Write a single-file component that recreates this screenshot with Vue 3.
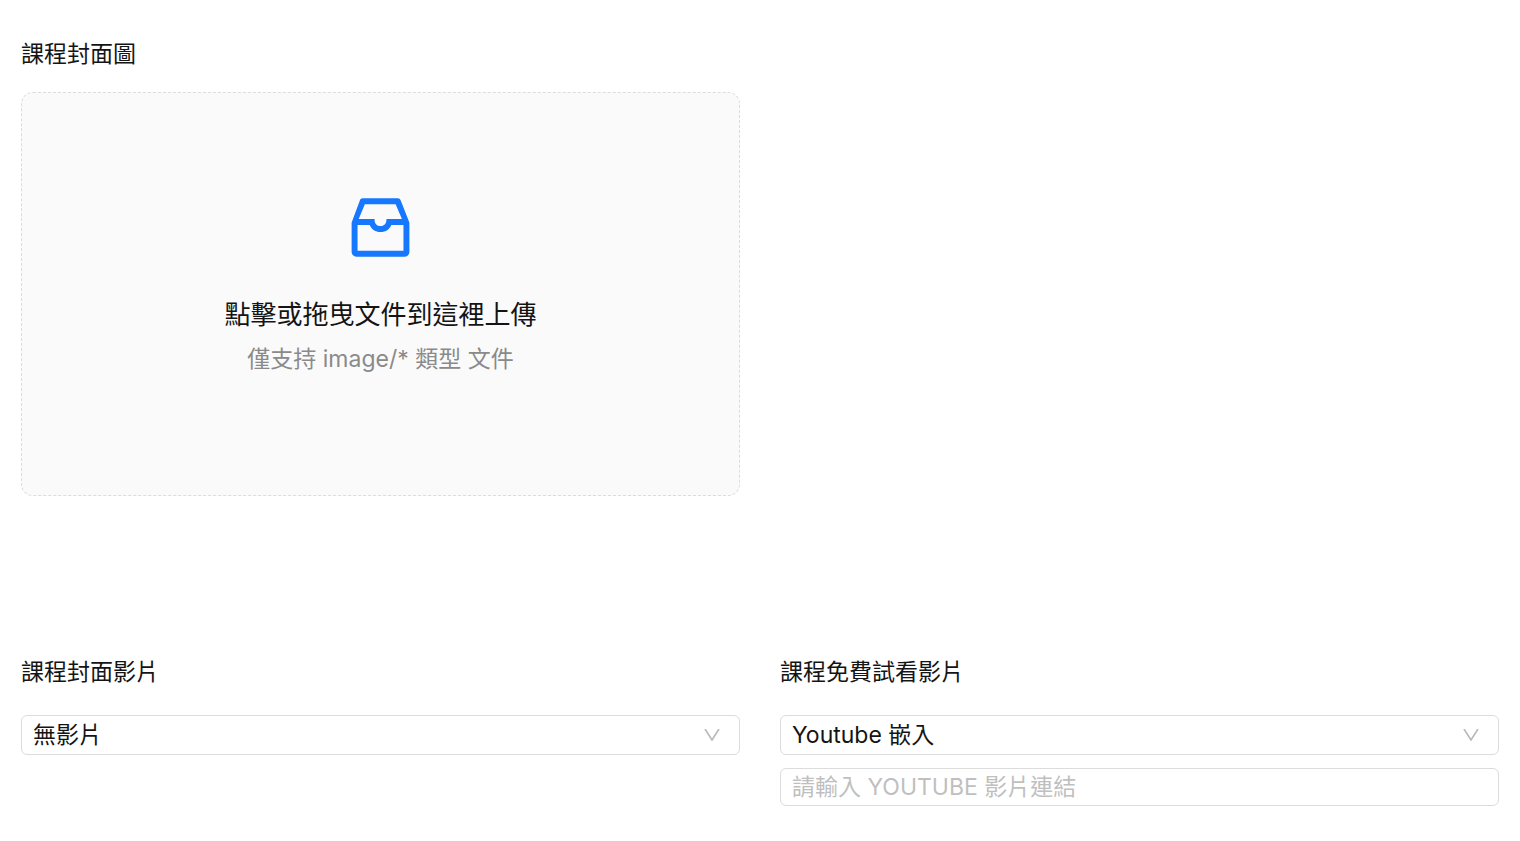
<script setup>
import { ref } from 'vue'

const coverVideo = ref('none')
const trialVideo = ref('youtube')
const trialUrl = ref('')

const videoTypes = [
  { value: 'none', label: '無影片' },
  { value: 'youtube', label: 'Youtube 嵌入' },
]
</script>

<template>
  <form class="course-form" @submit.prevent>
    <section class="row row-cover">
      <div class="field">
        <label class="field-label" for="cover-image">課程封面圖</label>
        <label class="dropzone">
          <input id="cover-image" class="file-input" type="file" accept="image/*" />
          <svg class="inbox" viewBox="0 0 1024 1024" aria-hidden="true">
            <path d="M885.2 446.3l-.2-.8-112.2-285.1c-5-16.1-19.9-27.2-36.8-27.2H281.2c-17 0-32.1 11.3-36.9 27.6L139.4 443l-.3.7-.2.8c-1.3 4.9-1.7 9.9-1 14.8-.1 1.6-.2 3.2-.2 4.8V830a60.9 60.9 0 0060.8 60.8h627.2c33.5 0 60.8-27.3 60.9-60.8V464.1c0-1.3 0-2.6-.1-3.7.4-4.9 0-9.6-1.3-14.1zm-295.8-43l-.3 15.7c-.8 44.9-31.8 75.1-77.1 75.1-22.1 0-41.1-7.1-54.8-20.6S436 441.2 435.6 419l-.3-15.7H229.5L309 210h399.2l81.7 193.3H589.4zm-375 76.8h157.3c24.3 57.1 76 90.8 140.4 90.8 33.7 0 65-9.4 90.3-27.2 22.2-15.6 39.5-37.4 50.7-63.6h156.5V814H214.4V480.1z" />
          </svg>
          <span class="drop-title">點擊或拖曳文件到這裡上傳</span>
          <span class="drop-hint">僅支持 image/* 類型 文件</span>
        </label>
      </div>
    </section>

    <section class="row">
      <div class="field">
        <label class="field-label field-label-wide" for="cover-video">課程封面影片</label>
        <div class="select-box">
          <select id="cover-video" v-model="coverVideo" class="control select">
            <option v-for="t in videoTypes" :key="t.value" :value="t.value">{{ t.label }}</option>
          </select>
          <svg class="arrow" viewBox="0 0 16 12" aria-hidden="true"><path d="M1 0l7 11 7-11" /></svg>
        </div>
      </div>

      <div class="field">
        <label class="field-label field-label-wide" for="trial-video">課程免費試看影片</label>
        <div class="select-box">
          <select id="trial-video" v-model="trialVideo" class="control select">
            <option v-for="t in videoTypes" :key="t.value" :value="t.value">{{ t.label }}</option>
          </select>
          <svg class="arrow" viewBox="0 0 16 12" aria-hidden="true"><path d="M1 0l7 11 7-11" /></svg>
        </div>
        <input
          v-model="trialUrl"
          class="control url-input"
          type="text"
          aria-label="YOUTUBE 影片連結"
          placeholder="請輸入 YOUTUBE 影片連結"
        />
      </div>
    </section>
  </form>
</template>

<style>
body {
  background: #fff;
}
</style>

<style scoped>
.course-form {
  padding: 36px 21px;
  font-family: Inter, "Noto Sans CJK TC", sans-serif;
  font-size: 23px;
  line-height: 36px;
  color: #141414;
}

.row {
  display: grid;
  grid-template-columns: 1fr 1fr;
  gap: 40px;
}

.row-cover {
  margin-bottom: 158px;
}

.field {
  display: flex;
  flex-direction: column;
  min-width: 0;
}

.field-label {
  align-self: flex-start;
  margin-bottom: 20px;
}

.field-label-wide {
  margin-bottom: 25px;
}

.dropzone {
  box-sizing: border-box;
  position: relative;
  display: flex;
  flex-direction: column;
  align-items: center;
  min-height: 404px;
  padding: 95px 24px;
  border: 1px dashed #dcdcdc;
  border-radius: 12px;
  background: #fafafa;
  text-align: center;
  cursor: pointer;
}

.file-input {
  position: absolute;
  inset: 0;
  width: 100%;
  height: 100%;
  margin: 0;
  opacity: 0;
  cursor: pointer;
}

.inbox {
  width: 79px;
  height: 79px;
  margin-bottom: 28px;
  fill: #1677ff;
}

.drop-title {
  margin-bottom: 6px;
  font-size: 26px;
  line-height: 40px;
}

.drop-hint {
  color: #8a8a8a;
}

.select-box {
  position: relative;
}

.control {
  box-sizing: border-box;
  display: block;
  width: 100%;
  height: 40px;
  margin: 0;
  padding: 0 11px;
  border: 1px solid #dcdcdc;
  border-radius: 6px;
  outline: none;
  background: #fff;
  color: #141414;
  font: inherit;
}

.control:focus-visible {
  border-color: #1677ff;
}

.select {
  padding-right: 48px;
  appearance: none;
  cursor: pointer;
}

.arrow {
  position: absolute;
  top: 14px;
  right: 20px;
  width: 16px;
  height: 12px;
  fill: none;
  stroke: #b8b8b8;
  stroke-width: 1.6;
  pointer-events: none;
}

.url-input {
  height: 38px;
  margin-top: 13px;
}

.url-input::placeholder {
  color: #bfbfbf;
  opacity: 1;
}
</style>
